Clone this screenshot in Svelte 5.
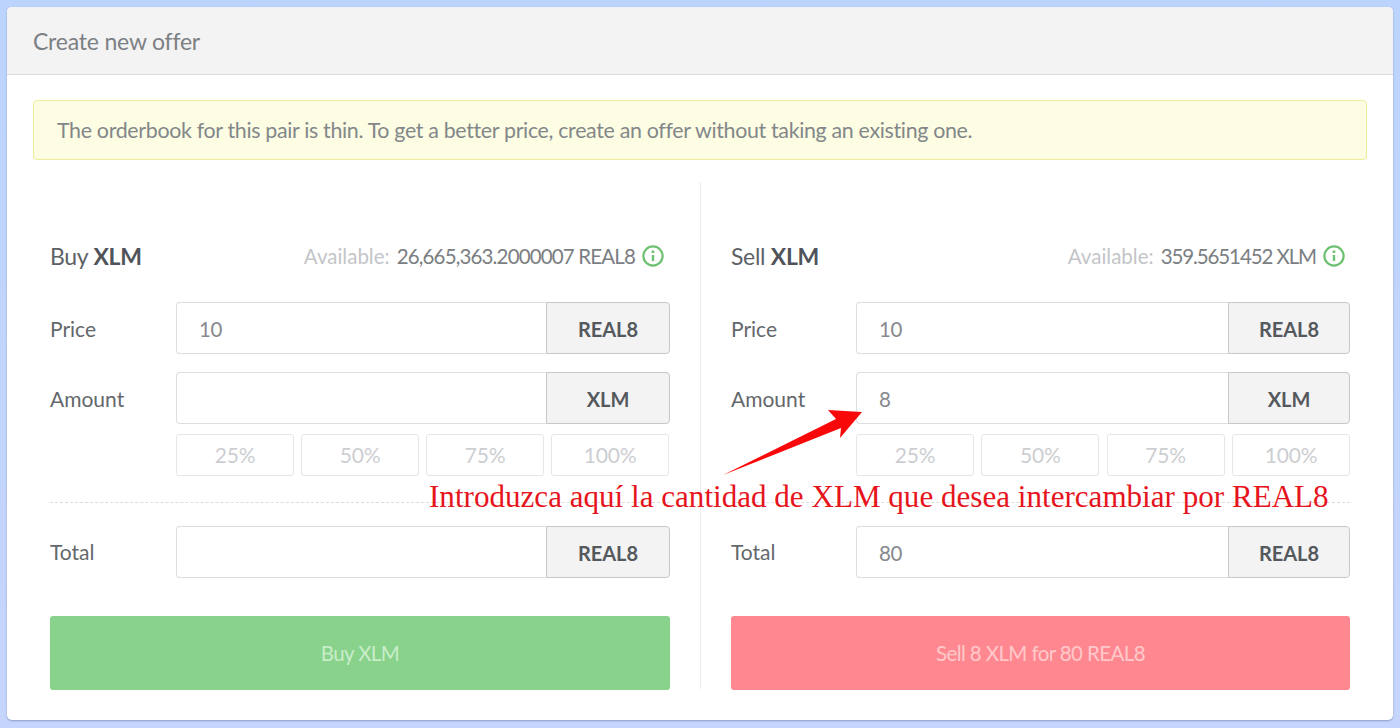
<script>
  const sides = [
    { title: 'Buy', avail: '26,665,363.2000007 REAL8', price: '10', amount: '', total: '', btn: 'Buy XLM', cls: 'buy' },
    { title: 'Sell', avail: '359.5651452 XLM', price: '10', amount: '8', total: '80', btn: 'Sell 8 XLM for 80 REAL8', cls: 'sell' }
  ];
  const pcts = ['25%', '50%', '75%', '100%'];
</script>

<div class="page">
  <section class="card">
    <header class="head">Create new offer</header>
    <div class="body">
      <div class="alert">The orderbook for this pair is thin. To get a better price, create an offer without taking an existing one.</div>
      <div class="cols">
        {#each sides as s}
          <div class="col {s.cls}">
            <div class="top">
              <div class="title">{s.title} <b>XLM</b></div>
              <div class="avail">
                <span class="muted">Available:</span>
                <span class="val">{s.avail}</span>
                <svg viewBox="0 0 24 24" width="24" height="24" fill="none" stroke="#6cc070" stroke-width="2.2">
                  <circle cx="12" cy="12" r="9.6" />
                  <path d="M12 11v6" stroke-width="2.4" />
                  <path d="M12 6.6v2.4" stroke-width="2.6" />
                </svg>
              </div>
            </div>
            <div class="row r1">
              <span class="lbl">Price</span>
              <div class="group"><div class="input">{s.price}</div><div class="addon">REAL8</div></div>
            </div>
            <div class="row r2">
              <span class="lbl">Amount</span>
              <div class="group"><div class="input">{s.amount}</div><div class="addon">XLM</div></div>
            </div>
            <div class="pcts">
              {#each pcts as p}<div class="pct">{p}</div>{/each}
            </div>
            <div class="dash"></div>
            <div class="row">
              <span class="lbl total">Total</span>
              <div class="group"><div class="input">{s.total}</div><div class="addon">REAL8</div></div>
            </div>
            <div class="btn">{s.btn}</div>
          </div>
        {/each}
      </div>
    </div>
  </section>

  <svg class="arrow" viewBox="0 0 150 80" width="150" height="80">
    <path d="M2 77 L115 21 L107 12 L141 14 L119 40 L120 30 Z" fill="#f80808" />
  </svg>
  <div class="note">Introduzca aquí la cantidad de XLM que desea intercambiar por REAL8</div>
</div>

<style>
  :global(body) { margin: 0; }
  .page {
    position: relative;
    width: 1400px;
    height: 728px;
    box-sizing: border-box;
    padding: 7px;
    background: linear-gradient(#bcd4fd, #c6d5fb);
    font-family: "Lato", "Noto Sans", sans-serif;
    color: #5c6065;
    overflow: hidden;
  }
  .card {
    height: 713px;
    box-sizing: border-box;
    background: #fff;
    border-radius: 5px;
    box-shadow: 0 1px 2px rgba(90, 110, 160, 0.55);
    overflow: hidden;
  }
  .head {
    height: 68px;
    box-sizing: border-box;
    padding: 0 26px;
    display: flex;
    align-items: center;
    background: #f3f3f3;
    border-bottom: 1px solid #dcdcdc;
    font-size: 23px;
    letter-spacing: -0.2px;
    color: #7c8084;
  }
  .body { padding: 25px 26px 0; }
  .alert {
    height: 60px;
    box-sizing: border-box;
    display: flex;
    align-items: center;
    padding: 0 23px;
    background: #fcfde3;
    border: 1px solid #ecec9c;
    border-radius: 4px;
    font-size: 21.4px;
    letter-spacing: -0.33px;
    color: #83878a;
  }
  .cols { display: grid; grid-template-columns: 668px 666px; margin-top: 22px; }
  .col { height: 507px; box-sizing: border-box; }
  .buy { padding: 0 30px 0 17px; border-right: 1px solid #ececec; }
  .sell { padding: 0 17px 0 30px; }
  .top {
    height: 120px;
    display: flex;
    align-items: center;
    justify-content: space-between;
    padding-right: 5px;
    box-sizing: border-box;
    padding-top: 28px;
  }
  .sell .top { padding-right: 4px; }
  .title { font-size: 23px; letter-spacing: -0.3px; color: #5d6165; }
  .title b { font-weight: 700; color: #50545a; }
  .avail { display: flex; align-items: center; gap: 7px; font-size: 20.5px; }
  .avail svg { margin-left: -1px; }
  .muted { color: #c3c5c8; }
  .val { color: #7b7e82; letter-spacing: -0.85px; }
  .sell .val { letter-spacing: -1.1px; }
  .row { display: flex; align-items: center; height: 52px; }
  .r1 { margin-bottom: 18px; }
  .lbl { width: 126px; flex: none; font-size: 21px; color: #64686c; }
  .sell .lbl { width: 125px; }
  .lbl.total { padding-bottom: 1px; }
  .group { flex: 1; display: flex; height: 52px; }
  .input {
    flex: 1;
    box-sizing: border-box;
    border: 1px solid #dcdfe2;
    border-right: none;
    border-radius: 4px 0 0 4px;
    padding: 1px 22px 0;
    display: flex;
    align-items: center;
    font-size: 20.5px;
    letter-spacing: -0.5px;
    color: #86898d;
  }
  .addon {
    width: 124px;
    box-sizing: border-box;
    display: flex;
    align-items: center;
    justify-content: center;
    padding-top: 1px;
    background: #f3f3f3;
    border: 1px solid #c6c8ca;
    border-radius: 0 4px 4px 0;
    font-size: 20px;
    font-weight: 700;
    color: #55595e;
  }
  .sell .addon { width: 122px; }
  .pcts { display: flex; justify-content: space-between; margin: 10px 1px 0 126px; }
  .sell .pcts { margin: 10px 0 0 125px; }
  .pct {
    width: 118px;
    height: 42px;
    box-sizing: border-box;
    border: 1px solid #e4e6e8;
    border-radius: 3px;
    display: flex;
    align-items: center;
    justify-content: center;
    padding-bottom: 1px;
    font-size: 21px;
    letter-spacing: -0.2px;
    color: #ccced1;
  }
  .dash { border-top: 1px dashed #dcdcdc; margin: 26px 0 23px; }
  .btn {
    height: 74px;
    margin-top: 38px;
    border-radius: 3px;
    display: flex;
    align-items: center;
    justify-content: center;
    font-size: 20.5px;
    letter-spacing: -0.6px;
  }
  .buy .btn { background: #88d28b; color: #c9edc9; }
  .sell .btn { background: #ff8890; color: #ffc8cb; }
  .arrow { position: absolute; left: 721px; top: 398px; }
  .note {
    position: absolute;
    left: 429px;
    top: 480px;
    font-family: "Liberation Serif", serif;
    font-size: 31.1px;
    line-height: 34px;
    color: #e6141c;
    white-space: nowrap;
  }
</style>
